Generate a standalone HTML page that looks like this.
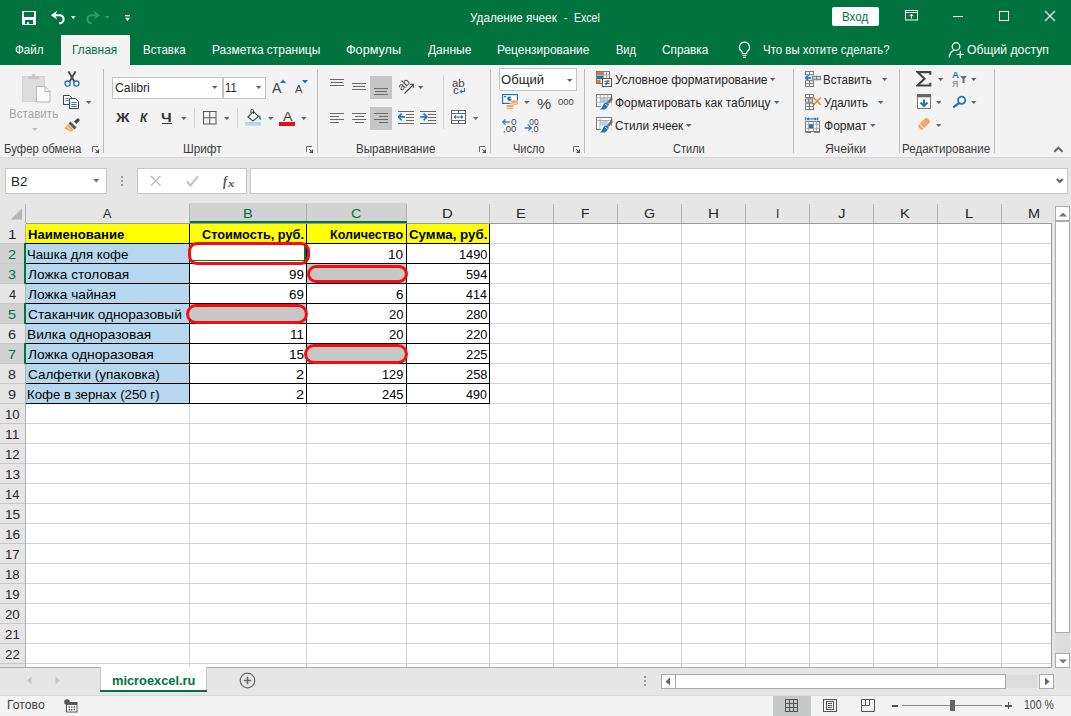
<!DOCTYPE html>
<html lang="ru"><head><meta charset="utf-8"><title>Удаление ячеек - Excel</title>
<style>
html,body{margin:0;padding:0}
body{width:1071px;height:716px;position:relative;overflow:hidden;background:#fff;font-family:"Liberation Sans",sans-serif;}
.r{position:absolute;display:block;box-sizing:border-box}
.t{position:absolute;white-space:pre;transform-origin:0 50%;display:block}
</style></head><body>
<div class="r" style="left:0px;top:0px;width:1071px;height:65px;background:#00733f;"></div>
<div class="r" style="left:0px;top:65px;width:1071px;height:92px;background:#f3f3f3;"></div>
<div class="r" style="left:0px;top:157px;width:1071px;height:1px;background:#d6d6d6;"></div>
<div class="r" style="left:0px;top:158px;width:1071px;height:45px;background:#e6e6e6;"></div>
<div class="r" style="left:61px;top:35px;width:69px;height:30px;background:#f3f3f3;"></div>
<span class="t" style="left:470.30px;top:11.34px;color:#fff;transform:scaleX(0.9780);font-size:12px;line-height:15px;">Удаление ячеек</span>
<span class="t" style="left:563.75px;top:11.34px;color:#fff;transform:scaleX(0.8133);font-size:12px;line-height:15px;">-</span>
<span class="t" style="left:573.76px;top:11.34px;color:#fff;transform:scaleX(0.8798);font-size:12px;line-height:15px;">Excel</span>
<div class="r" style="left:832px;top:7px;width:47px;height:19px;background:#fff;border-radius:2px;"></div>
<span class="t" style="left:842.26px;top:9.84px;color:#00733f;transform:scaleX(0.9655);font-size:12px;line-height:15px;">Вход</span>
<svg class="r" style="left:22px;top:11px" width="14" height="14" viewBox="0 0 14 14"><path d="M0 0h14v14h-14z M2 1v5h10v-5z M3 9v4h2v-2h2v2h4v-4z" fill="#fff" fill-rule="evenodd"/></svg>
<svg class="r" style="left:50px;top:9px" width="18" height="17" viewBox="0 0 18 17"><path d="M0.800 6.200l6.400-4.400-1.500 3.400h3.800a5 5 0 0 1 0.300 10h-0.800v-2h0.600a3 3 0 0 0-0.100-6h-3.800l1.500 3.400z" fill="#fff"/></svg>
<svg class="r" style="left:70.7px;top:15.7px" width="6" height="4" viewBox="0 0 6 4"><path d="M0 0h4.600l-2.300 3z" fill="#fff"/></svg>
<svg class="r" style="left:83px;top:9px" width="18" height="17" viewBox="0 0 18 17"><path d="M17.200 6.200l-6.400-4.400 1.500 3.400h-3.800a5 5 0 0 0-0.300 10h0.800v-2h-0.600a3 3 0 0 1 0.100-6h3.800l-1.500 3.400z" fill="#2e9a70"/></svg>
<svg class="r" style="left:104.7px;top:15.7px" width="6" height="4" viewBox="0 0 6 4"><path d="M0 0h4.600l-2.300 3z" fill="#2e9a70"/></svg>
<svg class="r" style="left:124px;top:13.7px" width="8" height="9" viewBox="0 0 8 9"><rect x="1" y="1" width="5" height="1.300" fill="#fff"/><path d="M1 3.800h5l-2.500 3.100z" fill="#fff"/></svg>
<svg class="r" style="left:905px;top:10px" width="14" height="11" viewBox="0 0 14 11"><rect x="0.5" y="0.5" width="12" height="9.5" fill="none" stroke="#fff"/><path d="M0.5 2.5h12" stroke="#fff"/><path d="M6.5 8.5v-4 M4.5 6.2l2-2 2 2" fill="none" stroke="#fff"/></svg>
<div class="r" style="left:953px;top:16px;width:10px;height:1px;background:#fff;"></div>
<div class="r" style="left:999px;top:11px;width:10px;height:10px;background:transparent;border:1px solid #fff;"></div>
<svg class="r" style="left:1044px;top:10px" width="12" height="12" viewBox="0 0 12 12"><path d="M1 1l10 10M11 1l-10 10" stroke="#fff" stroke-width="1.1" fill="none"/></svg>
<span class="t" style="left:14.52px;top:43.34px;color:#fff;transform:scaleX(0.9703);font-size:12px;line-height:15px;">Файл</span>
<span class="t" style="left:143.22px;top:43.34px;color:#fff;transform:scaleX(0.9550);font-size:12px;line-height:15px;">Вставка</span>
<span class="t" style="left:212.25px;top:43.34px;color:#fff;transform:scaleX(0.9941);font-size:12px;line-height:15px;">Разметка страницы</span>
<span class="t" style="left:346.33px;top:43.34px;color:#fff;transform:scaleX(1.0531);font-size:12px;line-height:15px;">Формулы</span>
<span class="t" style="left:427.88px;top:43.34px;color:#fff;transform:scaleX(0.9997);font-size:12px;line-height:15px;">Данные</span>
<span class="t" style="left:497.25px;top:43.34px;color:#fff;transform:scaleX(0.9970);font-size:12px;line-height:15px;">Рецензирование</span>
<span class="t" style="left:615.76px;top:43.34px;color:#fff;transform:scaleX(0.9204);font-size:12px;line-height:15px;">Вид</span>
<span class="t" style="left:662.46px;top:43.34px;color:#fff;transform:scaleX(0.9853);font-size:12px;line-height:15px;">Справка</span>
<span class="t" style="left:763.34px;top:43.34px;color:#fff;transform:scaleX(0.9546);font-size:12px;line-height:15px;">Что вы хотите сделать?</span>
<span class="t" style="left:967.49px;top:43.34px;color:#fff;transform:scaleX(1.0160);font-size:12px;line-height:15px;">Общий доступ</span>
<span class="t" style="left:72.25px;top:43.34px;color:#00733f;transform:scaleX(0.9895);font-size:12px;line-height:15px;">Главная</span>
<svg class="r" style="left:737px;top:41px" width="15" height="18" viewBox="0 0 15 18"><path d="M7.5 1.2a5 5 0 0 0-3 9c.8.7 1 1.4 1 2.3h4c0-.9.2-1.6 1-2.3a5 5 0 0 0-3-9z" fill="none" stroke="#fff" stroke-width="1.2"/><path d="M5.5 14.3h4M6 16.2h3" stroke="#fff" stroke-width="1.1"/></svg>
<svg class="r" style="left:948px;top:41px" width="17" height="18" viewBox="0 0 17 18"><circle cx="8" cy="5.5" r="3.8" fill="none" stroke="#fff" stroke-width="1.2"/><path d="M1.2 16.5c.3-4 2.5-6.5 5-7.2" fill="none" stroke="#fff" stroke-width="1.2"/><path d="M12.300 9.800v7.400M8.600 13.500h7.400" stroke="#fff" stroke-width="1.200"/></svg>
<div class="r" style="left:103px;top:69px;width:1px;height:84px;background:#bcbcbc;"></div>
<div class="r" style="left:317px;top:69px;width:1px;height:84px;background:#bcbcbc;"></div>
<div class="r" style="left:490px;top:69px;width:1px;height:84px;background:#bcbcbc;"></div>
<div class="r" style="left:584px;top:69px;width:1px;height:84px;background:#bcbcbc;"></div>
<div class="r" style="left:793px;top:69px;width:1px;height:84px;background:#bcbcbc;"></div>
<div class="r" style="left:899px;top:69px;width:1px;height:84px;background:#bcbcbc;"></div>
<div class="r" style="left:994px;top:69px;width:1px;height:84px;background:#bcbcbc;"></div>
<div class="r" style="left:443px;top:75px;width:1px;height:54px;background:#d4d4d4;"></div>
<div class="r" style="left:194px;top:108px;width:1px;height:20px;background:#d4d4d4;"></div>
<div class="r" style="left:237px;top:108px;width:1px;height:20px;background:#d4d4d4;"></div>
<span class="t" style="left:4.42px;top:142.14px;color:#3b3b3b;transform:scaleX(0.9477);font-size:12px;line-height:15px;">Буфер обмена</span>
<span class="t" style="left:183.19px;top:142.14px;color:#3b3b3b;transform:scaleX(0.9790);font-size:12px;line-height:15px;">Шрифт</span>
<span class="t" style="left:356.28px;top:142.14px;color:#3b3b3b;transform:scaleX(0.9603);font-size:12px;line-height:15px;">Выравнивание</span>
<span class="t" style="left:513.14px;top:142.14px;color:#3b3b3b;transform:scaleX(0.9191);font-size:12px;line-height:15px;">Число</span>
<span class="t" style="left:672.61px;top:142.14px;color:#3b3b3b;transform:scaleX(0.9181);font-size:12px;line-height:15px;">Стили</span>
<span class="t" style="left:825.08px;top:142.14px;color:#3b3b3b;transform:scaleX(1.0192);font-size:12px;line-height:15px;">Ячейки</span>
<span class="t" style="left:902.27px;top:142.14px;color:#3b3b3b;transform:scaleX(0.9641);font-size:12px;line-height:15px;">Редактирование</span>
<svg class="r" style="left:92px;top:146px" width="8" height="8" viewBox="0 0 8 8"><path d="M0.500 6v-5.500h5.500" fill="none" stroke="#6a6a6a" stroke-width="1"/><path d="M7 3v4h-4z" fill="#555"/><path d="M3.300 3.300l2.200 2.200" stroke="#555" stroke-width="1"/></svg>
<svg class="r" style="left:306px;top:146px" width="8" height="8" viewBox="0 0 8 8"><path d="M0.500 6v-5.500h5.500" fill="none" stroke="#6a6a6a" stroke-width="1"/><path d="M7 3v4h-4z" fill="#555"/><path d="M3.300 3.300l2.200 2.200" stroke="#555" stroke-width="1"/></svg>
<svg class="r" style="left:479px;top:146px" width="8" height="8" viewBox="0 0 8 8"><path d="M0.500 6v-5.500h5.500" fill="none" stroke="#6a6a6a" stroke-width="1"/><path d="M7 3v4h-4z" fill="#555"/><path d="M3.300 3.300l2.200 2.200" stroke="#555" stroke-width="1"/></svg>
<svg class="r" style="left:573px;top:146px" width="8" height="8" viewBox="0 0 8 8"><path d="M0.500 6v-5.500h5.500" fill="none" stroke="#6a6a6a" stroke-width="1"/><path d="M7 3v4h-4z" fill="#555"/><path d="M3.300 3.300l2.200 2.200" stroke="#555" stroke-width="1"/></svg>
<svg class="r" style="left:1053px;top:146px" width="11" height="7" viewBox="0 0 11 7"><path d="M1.300 5.800l4.100-4.100 4.100 4.100" fill="none" stroke="#666" stroke-width="2.200"/></svg>
<svg class="r" style="left:22px;top:73px" width="29" height="30" viewBox="0 0 29 30"><rect x="0.500" y="3.500" width="22" height="25" fill="#dcdcdc" stroke="#d4d4d4"/><path d="M6 6v-3h3.500a2 2 0 0 1 4 0h3.500v3z" fill="#c6c6c6"/><path d="M14.5 13.5h8.5l5 5v10.5h-13.5z" fill="#fafafa" stroke="#b8b8b8"/><path d="M23 13.5v5h5" fill="none" stroke="#b8b8b8"/></svg>
<span class="t" style="left:9.48px;top:106.84px;color:#a6a6a6;transform:scaleX(0.9667);font-size:12px;line-height:15px;">Вставить</span>
<svg class="r" style="left:32px;top:128px" width="6" height="4" viewBox="0 0 6 4"><path d="M0 0h5.5l-2.75 3z" fill="#bdbdbd"/></svg>
<svg class="r" style="left:64px;top:71px" width="16" height="16" viewBox="0 0 16 16"><path d="M4.500 0.500l5.800 10M11.500 0.500l-5.800 10" stroke="#444" stroke-width="1.800" fill="none"/><circle cx="3.6" cy="12.6" r="2.6" fill="none" stroke="#1e73be" stroke-width="1.3"/><circle cx="12.4" cy="12.6" r="2.6" fill="none" stroke="#1e73be" stroke-width="1.3"/></svg>
<svg class="r" style="left:63px;top:95px" width="17" height="14" viewBox="0 0 17 14"><path d="M0.5 0.5h6l2 2v7h-8z" fill="#fff" stroke="#444"/><path d="M2.5 3.5h3M2.5 5.5h3" stroke="#1e73be"/><path d="M6.5 3.5h6l3 3v7h-9z" fill="#fff" stroke="#444"/><path d="M8.5 7.5h5M8.5 9.5h5M8.5 11.5h5" stroke="#1e73be"/></svg>
<svg class="r" style="left:86px;top:101px" width="6" height="4" viewBox="0 0 6 4"><path d="M0 0h5.5l-2.75 3z" fill="#666"/></svg>
<svg class="r" style="left:64px;top:117px" width="17" height="15" viewBox="0 0 17 15"><path d="M10 4.5l4-3.5 2 2-3.5 4z" fill="#444"/><path d="M6.5 4.5l6 6-2 2-6-6z" fill="#555"/><path d="M4 7l6 6-3.5 1.5-6-3z" fill="#f5a55a"/><path d="M3 9.5l3.5 3.5" stroke="#fff" stroke-width=".8"/></svg>
<div class="r" style="left:112px;top:76.5px;width:110.5px;height:22px;background:#fff;border:1px solid #c4c4c4;"></div>
<div class="r" style="left:223px;top:76.5px;width:43px;height:22px;background:#fff;border:1px solid #c4c4c4;"></div>
<span class="t" style="left:114.70px;top:80.84px;color:#262626;transform:scaleX(1.0220);font-size:12px;line-height:15px;">Calibri</span>
<span class="t" style="left:225.29px;top:80.84px;color:#262626;transform:scaleX(0.9350);font-size:12px;line-height:15px;">11</span>
<svg class="r" style="left:212px;top:86px" width="6" height="4" viewBox="0 0 6 4"><path d="M0 0h5.5l-2.75 3z" fill="#666"/></svg>
<svg class="r" style="left:255.5px;top:86px" width="6" height="4" viewBox="0 0 6 4"><path d="M0 0h5.5l-2.75 3z" fill="#666"/></svg>
<span class="t" style="left:272.27px;top:78.98px;color:#444;transform:scaleX(0.9733);font-size:14.5px;line-height:18px;">A</span>
<svg class="r" style="left:280px;top:79px" width="7" height="5" viewBox="0 0 7 5"><path d="M0 4l3-3.5 3 3.5z" fill="#1e73be"/></svg>
<span class="t" style="left:295.28px;top:82.86px;color:#444;transform:scaleX(1.0577);font-size:10.5px;line-height:13px;">A</span>
<svg class="r" style="left:301.5px;top:79.5px" width="7" height="5" viewBox="0 0 7 5"><path d="M0 0h6l-3 3.5z" fill="#1e73be"/></svg>
<span class="t" style="left:115.98px;top:110.17px;color:#333;transform:scaleX(1.1990);font-size:12.5px;line-height:16px;font-weight:bold;">Ж</span>
<span class="t" style="left:140.00px;top:110.17px;color:#333;transform:scaleX(0.9524);font-size:12.5px;line-height:16px;font-weight:bold;font-style:italic;">К</span>
<span class="t" style="left:161.09px;top:110.17px;color:#333;transform:scaleX(1.2145);font-size:12.5px;line-height:16px;font-weight:bold;">Ч</span>
<div class="r" style="left:162px;top:123px;width:9.5px;height:1.3px;background:#333;"></div>
<svg class="r" style="left:180.5px;top:116.5px" width="6" height="4" viewBox="0 0 6 4"><path d="M0 0h5.5l-2.75 3z" fill="#666"/></svg>
<svg class="r" style="left:203px;top:111px" width="14" height="14" viewBox="0 0 14 14"><rect x="0.5" y="0.5" width="12.5" height="12.5" fill="none" stroke="#555"/><path d="M6.75 0.5v12.5M0.5 6.75h12.5" stroke="#555"/></svg>
<svg class="r" style="left:223.5px;top:116.5px" width="6" height="4" viewBox="0 0 6 4"><path d="M0 0h5.5l-2.75 3z" fill="#666"/></svg>
<svg class="r" style="left:245px;top:109px" width="18" height="17" viewBox="0 0 18 17"><rect x="0.200" y="13" width="15.800" height="3.700" fill="#b3d4ee"/><path d="M3 8l5.500-5.500 5 5-5.500 4.500z" fill="#fff" stroke="#444" stroke-width="1.100"/><path d="M8.500 5v-3.500a1.300 1.300 0 0 0-2.600 0v2.500" fill="none" stroke="#444" stroke-width="1"/><path d="M13.200 5.500c2.300 1.500 3.300 3.500 2.600 5.200-0.800 0.500-1.800-0.300-1.600-2z" fill="#1e73be"/></svg>
<svg class="r" style="left:268px;top:116.5px" width="6" height="4" viewBox="0 0 6 4"><path d="M0 0h5.5l-2.75 3z" fill="#666"/></svg>
<span class="t" style="left:283.00px;top:109.00px;color:#444;transform:scaleX(1.0956);font-size:13px;line-height:16px;">A</span>
<div class="r" style="left:279px;top:122px;width:16.3px;height:3.8px;background:#ea0a14;"></div>
<svg class="r" style="left:300.5px;top:116.5px" width="6" height="4" viewBox="0 0 6 4"><path d="M0 0h5.5l-2.75 3z" fill="#666"/></svg>
<div class="r" style="left:370px;top:76px;width:21.5px;height:22.5px;background:#c6c6c6;"></div>
<div class="r" style="left:370px;top:107px;width:21.5px;height:22.5px;background:#c6c6c6;"></div>
<div class="r" style="left:330.0px;top:79px;width:14px;height:1px;background:#6a6a6a;"></div>
<div class="r" style="left:331.0px;top:82px;width:12px;height:1px;background:#6a6a6a;"></div>
<div class="r" style="left:330.0px;top:85px;width:14px;height:1px;background:#6a6a6a;"></div>
<div class="r" style="left:352.0px;top:83px;width:14px;height:1px;background:#6a6a6a;"></div>
<div class="r" style="left:353.0px;top:86px;width:12px;height:1px;background:#6a6a6a;"></div>
<div class="r" style="left:352.0px;top:89px;width:14px;height:1px;background:#6a6a6a;"></div>
<div class="r" style="left:374.0px;top:88px;width:14px;height:1px;background:#6a6a6a;"></div>
<div class="r" style="left:375.0px;top:91px;width:12px;height:1px;background:#6a6a6a;"></div>
<div class="r" style="left:374.0px;top:94px;width:14px;height:1px;background:#6a6a6a;"></div>
<div class="r" style="left:330px;top:113px;width:14px;height:1px;background:#6a6a6a;"></div>
<div class="r" style="left:330px;top:116px;width:9px;height:1px;background:#6a6a6a;"></div>
<div class="r" style="left:330px;top:119px;width:14px;height:1px;background:#6a6a6a;"></div>
<div class="r" style="left:330px;top:122px;width:9px;height:1px;background:#6a6a6a;"></div>
<div class="r" style="left:352.0px;top:113px;width:14px;height:1px;background:#6a6a6a;"></div>
<div class="r" style="left:354.5px;top:116px;width:9px;height:1px;background:#6a6a6a;"></div>
<div class="r" style="left:352.0px;top:119px;width:14px;height:1px;background:#6a6a6a;"></div>
<div class="r" style="left:354.5px;top:122px;width:9px;height:1px;background:#6a6a6a;"></div>
<div class="r" style="left:374px;top:113px;width:14px;height:1px;background:#6a6a6a;"></div>
<div class="r" style="left:379px;top:116px;width:9px;height:1px;background:#6a6a6a;"></div>
<div class="r" style="left:374px;top:119px;width:14px;height:1px;background:#6a6a6a;"></div>
<div class="r" style="left:379px;top:122px;width:9px;height:1px;background:#6a6a6a;"></div>
<svg class="r" style="left:396px;top:76px" width="20" height="20" viewBox="0 0 20 20"><text x="0" y="0" font-size="11" fill="#444" transform="translate(5.800 15.300) rotate(-45)" font-family="Liberation Sans, sans-serif">ab</text><path d="M8.500 17.500l8.500-8.500" stroke="#444" stroke-width="1.100"/><path d="M13.800 8.200h3.600v3.600" fill="none" stroke="#444" stroke-width="1.100"/></svg>
<svg class="r" style="left:418px;top:86.2px" width="6" height="4" viewBox="0 0 6 4"><path d="M0 0h5.5l-2.75 3z" fill="#666"/></svg>
<span class="t" style="left:452.30px;top:75.89px;color:#444;transform:scaleX(1.0352);font-size:11px;line-height:14px;">ab</span>
<span class="t" style="left:453.01px;top:82.99px;color:#444;transform:scaleX(1.0473);font-size:11px;line-height:14px;">c</span>
<svg class="r" style="left:459px;top:88px" width="7" height="7" viewBox="0 0 7 7"><path d="M5.5 0v3.5h-4" fill="none" stroke="#1e73be" stroke-width="1.2"/><path d="M3 1.3l-2.6 2.2 2.6 2.2z" fill="#1e73be"/></svg>
<div class="r" style="left:398px;top:111px;width:16px;height:1px;background:#6a6a6a;"></div>
<div class="r" style="left:398px;top:123px;width:16px;height:1px;background:#6a6a6a;"></div>
<div class="r" style="left:406px;top:114px;width:8px;height:1px;background:#6a6a6a;"></div>
<div class="r" style="left:406px;top:117px;width:8px;height:1px;background:#6a6a6a;"></div>
<div class="r" style="left:406px;top:120px;width:8px;height:1px;background:#6a6a6a;"></div>
<svg class="r" style="left:398px;top:113px" width="8" height="8" viewBox="0 0 8 8"><path d="M7 3.900h-5.500" stroke="#1e73be" stroke-width="1.700"/><path d="M3.600 0.600l-3.300 3.300 3.300 3.300" fill="none" stroke="#1e73be" stroke-width="1.600"/></svg>
<div class="r" style="left:420px;top:111px;width:16px;height:1px;background:#6a6a6a;"></div>
<div class="r" style="left:420px;top:123px;width:16px;height:1px;background:#6a6a6a;"></div>
<div class="r" style="left:428px;top:114px;width:8px;height:1px;background:#6a6a6a;"></div>
<div class="r" style="left:428px;top:117px;width:8px;height:1px;background:#6a6a6a;"></div>
<div class="r" style="left:428px;top:120px;width:8px;height:1px;background:#6a6a6a;"></div>
<svg class="r" style="left:420px;top:113px" width="8" height="8" viewBox="0 0 8 8"><path d="M0.200 3.900h5.500" stroke="#1e73be" stroke-width="1.700"/><path d="M3.600 0.600l3.300 3.300-3.300 3.300" fill="none" stroke="#1e73be" stroke-width="1.600"/></svg>
<svg class="r" style="left:451px;top:110px" width="16" height="15" viewBox="0 0 16 15"><rect x="0.500" y="0.500" width="14" height="13" fill="#fff" stroke="#666"/><path d="M0.500 3.500h14M0.500 10.500h14M7.500 0.500v3M7.500 10.500v3" stroke="#666"/><path d="M3.500 7h8" stroke="#1e73be" stroke-width="1.100"/><path d="M5 5l-2.500 2 2.500 2zM10 5l2.500 2-2.500 2z" fill="#1e73be"/></svg>
<svg class="r" style="left:473px;top:116.5px" width="6" height="4" viewBox="0 0 6 4"><path d="M0 0h5.5l-2.75 3z" fill="#666"/></svg>
<div class="r" style="left:499px;top:67.5px;width:77.5px;height:23px;background:#fff;border:1px solid #c4c4c4;"></div>
<span class="t" style="left:501.23px;top:72.84px;color:#262626;transform:scaleX(1.0891);font-size:12px;line-height:15px;">Общий</span>
<svg class="r" style="left:567px;top:78.5px" width="6" height="4" viewBox="0 0 6 4"><path d="M0 0h5.5l-2.75 3z" fill="#666"/></svg>
<svg class="r" style="left:502px;top:94px" width="17" height="16" viewBox="0 0 17 16"><rect x="0.600" y="0.600" width="14.800" height="8.800" fill="#fff" stroke="#1e73be" stroke-width="1.200"/><circle cx="7.500" cy="4.800" r="2.300" fill="#1e73be"/><path d="M7.500 4.800h2.400v-2.400" fill="#fff"/><rect x="2" y="2" width="2.200" height="1.200" fill="#1e73be"/><rect x="11.800" y="6.600" width="2.200" height="1.200" fill="#1e73be"/><g fill="#f5a25f" stroke="#f3f3f3" stroke-width="0.700"><ellipse cx="12.300" cy="9.600" rx="4" ry="1.700"/><ellipse cx="12.300" cy="7.700" rx="4" ry="1.700"/><ellipse cx="8" cy="14" rx="4" ry="1.700"/><ellipse cx="8" cy="12.100" rx="4" ry="1.700"/></g></svg>
<svg class="r" style="left:523.5px;top:101px" width="6" height="4" viewBox="0 0 6 4"><path d="M0 0h5.5l-2.75 3z" fill="#666"/></svg>
<span class="t" style="left:537.27px;top:94.65px;color:#444;transform:scaleX(1.1402);font-size:14px;line-height:18px;">%</span>
<span class="t" style="left:558.35px;top:95.71px;color:#444;transform:scaleX(0.9916);font-size:9.5px;line-height:12px;">000</span>
<span class="t" style="left:510.78px;top:116.55px;color:#444;transform:scaleX(1.1854);font-size:8.5px;line-height:11px;">0</span>
<span class="t" style="left:503.24px;top:123.55px;color:#444;transform:scaleX(1.1172);font-size:8.5px;line-height:11px;">,00</span>
<svg class="r" style="left:502px;top:119px" width="8" height="6" viewBox="0 0 8 6"><path d="M7.5 3h-6" stroke="#1e73be" stroke-width="1.3"/><path d="M3.5 0.5l-3 2.5 3 2.5" fill="none" stroke="#1e73be" stroke-width="1.2"/></svg>
<span class="t" style="left:527.30px;top:116.55px;color:#444;transform:scaleX(0.9699);font-size:8.5px;line-height:11px;">,00</span>
<span class="t" style="left:530.55px;top:123.55px;color:#444;transform:scaleX(1.0704);font-size:8.5px;line-height:11px;">,0</span>
<svg class="r" style="left:524px;top:125px" width="8" height="6" viewBox="0 0 8 6"><path d="M0.5 3h6" stroke="#1e73be" stroke-width="1.3"/><path d="M4.5 0.5l3 2.5-3 2.5" fill="none" stroke="#1e73be" stroke-width="1.2"/></svg>
<svg class="r" style="left:596px;top:71px" width="16" height="16" viewBox="0 0 16 16"><rect x="0.500" y="0.500" width="13" height="12" fill="#fff" stroke="#7a7a7a"/><path d="M7.500 0.500v7M10.500 0.500v7M7 4h6.500" stroke="#9a9a9a"/><rect x="1" y="1" width="6" height="3" fill="#e07a2a"/><rect x="1" y="4.500" width="6" height="3.500" fill="#1e73be"/><rect x="1" y="8.500" width="3.600" height="3.500" fill="#e07a2a"/><rect x="6.500" y="7.500" width="9" height="8" fill="#fff" stroke="#555"/><path d="M8.500 10.300h5M8.500 12.700h5M12.400 8.900l-2.800 5.300" stroke="#444" stroke-width="1"/></svg>
<svg class="r" style="left:596px;top:94px" width="17" height="16" viewBox="0 0 17 16"><rect x="0.500" y="0.500" width="15" height="12" fill="#fff" stroke="#7a7a7a"/><rect x="4.300" y="4" width="7.400" height="5.500" fill="#b3d4ee"/><path d="M4.300 0.500v12M8 0.500v12M11.700 0.500v12M0.500 3.800h15M0.500 8.200h15" stroke="#a8a8a8" stroke-width="0.900"/><rect x="4.300" y="8.600" width="11.500" height="4.600" fill="#f3f3f3"/><path d="M0.500 12.500h4" stroke="#7a7a7a"/><path d="M16.200 1.600l-5.200 6.600 2 1.600 3.500-4.600z" fill="#6e6e6e"/><path d="M10.800 8.600l2 1.500c-0.500 2.500-1.900 4.400-4 5.400h-5.300c2-1 3.100-2.700 3.600-4.500 0.600-1.700 2-2.600 3.700-2.400z" fill="#1e73be"/><path d="M9.300 10.300l2.200 1.600" stroke="#fff" stroke-width="0.900"/></svg>
<svg class="r" style="left:596px;top:116.5px" width="17" height="16" viewBox="0 0 17 16"><rect x="0.500" y="0.500" width="15" height="12" fill="#fff" stroke="#7a7a7a"/><rect x="4.300" y="3.800" width="7.400" height="6" fill="#b3d4ee"/><path d="M0.500 3.500h15M4 0.500v12" stroke="#a8a8a8" stroke-width="0.900"/><rect x="4.300" y="8.600" width="11.500" height="4.600" fill="#f3f3f3"/><path d="M0.500 12.500h4" stroke="#7a7a7a"/><path d="M16.200 1.600l-5.200 6.600 2 1.600 3.500-4.600z" fill="#6e6e6e"/><path d="M10.800 8.600l2 1.500c-0.500 2.500-1.900 4.400-4 5.400h-5.300c2-1 3.100-2.700 3.600-4.500 0.600-1.700 2-2.600 3.700-2.400z" fill="#1e73be"/><path d="M9.300 10.300l2.200 1.600" stroke="#fff" stroke-width="0.900"/></svg>
<span class="t" style="left:614.58px;top:73.34px;color:#262626;transform:scaleX(0.9990);font-size:12px;line-height:15px;">Условное форматирование</span>
<svg class="r" style="left:770px;top:78px" width="6" height="4" viewBox="0 0 6 4"><path d="M0 0h5.5l-2.75 3z" fill="#666"/></svg>
<span class="t" style="left:614.78px;top:96.34px;color:#262626;transform:scaleX(0.9964);font-size:12px;line-height:15px;">Форматировать как таблицу</span>
<svg class="r" style="left:773.5px;top:101px" width="6" height="4" viewBox="0 0 6 4"><path d="M0 0h5.5l-2.75 3z" fill="#666"/></svg>
<span class="t" style="left:614.74px;top:118.84px;color:#262626;transform:scaleX(0.9848);font-size:12px;line-height:15px;">Стили ячеек</span>
<svg class="r" style="left:685.5px;top:124px" width="6" height="4" viewBox="0 0 6 4"><path d="M0 0h5.5l-2.75 3z" fill="#666"/></svg>
<svg class="r" style="left:805px;top:71px" width="17" height="16" viewBox="0 0 17 16"><rect x="0.500" y="0.500" width="4" height="3.300" fill="#fff" stroke="#7a7a7a"/><rect x="4.500" y="0.500" width="4" height="3.300" fill="#fff" stroke="#7a7a7a"/><rect x="7.500" y="5.300" width="4" height="3.400" fill="#b3d4ee" stroke="#7a7a7a"/><rect x="11.500" y="5.300" width="4" height="3.400" fill="#b3d4ee" stroke="#7a7a7a"/><path d="M6 7h-4.500" stroke="#1e73be" stroke-width="1.700"/><path d="M3.600 4.200l-3 2.800 3 2.800" fill="none" stroke="#1e73be" stroke-width="1.500"/><rect x="0.500" y="9.700" width="4" height="2.900" fill="#fff" stroke="#7a7a7a"/><rect x="4.500" y="9.700" width="4" height="2.900" fill="#fff" stroke="#7a7a7a"/><rect x="0.500" y="12.600" width="4" height="2.900" fill="#fff" stroke="#7a7a7a"/><rect x="4.500" y="12.600" width="4" height="2.900" fill="#fff" stroke="#7a7a7a"/></svg>
<svg class="r" style="left:805px;top:94px" width="17" height="16" viewBox="0 0 17 16"><rect x="0.500" y="0.500" width="4" height="2.900" fill="#fff" stroke="#7a7a7a"/><rect x="4.500" y="0.500" width="4" height="2.900" fill="#fff" stroke="#7a7a7a"/><path d="M3.500 4.800h-3v3.400h3" fill="none" stroke="#7a7a7a"/><rect x="3.500" y="4.800" width="4" height="3.400" fill="#b3d4ee" stroke="#7a7a7a"/><path d="M8.700 3.700l7 7M15.700 3.700l-7 7" stroke="#e8822e" stroke-width="1.500"/><rect x="0.500" y="9.700" width="4" height="2.900" fill="#fff" stroke="#7a7a7a"/><rect x="4.500" y="9.700" width="4" height="2.900" fill="#fff" stroke="#7a7a7a"/><rect x="0.500" y="12.600" width="4" height="2.900" fill="#fff" stroke="#7a7a7a"/><rect x="4.500" y="12.600" width="4" height="2.900" fill="#fff" stroke="#7a7a7a"/></svg>
<svg class="r" style="left:805px;top:116.5px" width="17" height="16" viewBox="0 0 17 16"><path d="M0.700 0.300v3.200M12.700 0.300v3.200" stroke="#1e73be" stroke-width="1.100"/><path d="M2 1.900h9.500" stroke="#1e73be" stroke-width="1.100"/><path d="M3.800 0.300l-2.300 1.600 2.300 1.600zM9.700 0.300l2.300 1.600-2.300 1.600z" fill="#1e73be"/><rect x="0.500" y="4.500" width="14" height="10" fill="#fff" stroke="#7a7a7a"/><path d="M0.500 7.300h14M0.500 11.300h14M3.800 4.500v10M8.300 4.500v10M11.600 4.500v10" stroke="#a0a0a0" stroke-width="0.900"/><rect x="3.800" y="7.300" width="4.500" height="4" fill="#1e73be"/><path d="M0.500 14.500v1h5.500M14.500 14.500v1h-5.500" fill="none" stroke="#7a7a7a"/></svg>
<span class="t" style="left:823.46px;top:73.34px;color:#262626;transform:scaleX(0.9582);font-size:12px;line-height:15px;">Вставить</span>
<svg class="r" style="left:882px;top:78px" width="6" height="4" viewBox="0 0 6 4"><path d="M0 0h5.5l-2.75 3z" fill="#666"/></svg>
<span class="t" style="left:823.70px;top:96.34px;color:#262626;transform:scaleX(0.9598);font-size:12px;line-height:15px;">Удалить</span>
<svg class="r" style="left:878px;top:101px" width="6" height="4" viewBox="0 0 6 4"><path d="M0 0h5.5l-2.75 3z" fill="#666"/></svg>
<span class="t" style="left:823.77px;top:118.84px;color:#262626;transform:scaleX(1.0016);font-size:12px;line-height:15px;">Формат</span>
<svg class="r" style="left:869.5px;top:124px" width="6" height="4" viewBox="0 0 6 4"><path d="M0 0h5.5l-2.75 3z" fill="#666"/></svg>
<svg class="r" style="left:916px;top:71px" width="16" height="16" viewBox="0 0 16 16"><path d="M14.300 3.800v-2.700h-12.800l7 6.700-7 6.700h12.800v-2.700" fill="none" stroke="#444" stroke-width="2.100" stroke-linejoin="miter"/></svg>
<svg class="r" style="left:938px;top:78px" width="6" height="4" viewBox="0 0 6 4"><path d="M0 0h5.5l-2.75 3z" fill="#666"/></svg>
<span class="t" style="left:951.71px;top:69.68px;color:#1e73be;transform:scaleX(1.0719);font-size:9px;line-height:11px;font-weight:bold;">А</span>
<span class="t" style="left:952.11px;top:77.51px;color:#999;transform:scaleX(0.9206);font-size:9.5px;line-height:12px;font-weight:bold;">Я</span>
<svg class="r" style="left:960px;top:75.5px" width="8" height="8" viewBox="0 0 8 8"><path d="M0 0h7l-2.500 3v4h-2v-4z" fill="#6e6e6e"/></svg>
<svg class="r" style="left:971px;top:78px" width="6" height="4" viewBox="0 0 6 4"><path d="M0 0h5.5l-2.75 3z" fill="#666"/></svg>
<svg class="r" style="left:917px;top:94px" width="15" height="16" viewBox="0 0 15 16"><rect x="0.500" y="0.500" width="13" height="14" fill="#fff" stroke="#777"/><rect x="0" y="0" width="14" height="3.300" fill="#666"/><path d="M7 5.500v6.500" stroke="#1e73be" stroke-width="2"/><path d="M3.500 8.500l3.500 3.500 3.500-3.500" fill="none" stroke="#1e73be" stroke-width="2"/></svg>
<svg class="r" style="left:936px;top:101px" width="6" height="4" viewBox="0 0 6 4"><path d="M0 0h5.5l-2.75 3z" fill="#666"/></svg>
<svg class="r" style="left:952px;top:94px" width="15" height="15" viewBox="0 0 15 15"><circle cx="9.700" cy="6.200" r="3.600" fill="#fff" stroke="#1e73be" stroke-width="1.800"/><path d="M7 9l-5.800 4.300" stroke="#1e73be" stroke-width="2.200"/></svg>
<svg class="r" style="left:971px;top:101px" width="6" height="4" viewBox="0 0 6 4"><path d="M0 0h5.5l-2.75 3z" fill="#666"/></svg>
<svg class="r" style="left:915.6px;top:116.2px" width="16" height="16" viewBox="0 0 16 16"><g transform="rotate(-45 8 8)"><rect x="1.800" y="4.800" width="12.600" height="6.400" rx="1.600" fill="#f5a66b"/><rect x="4.400" y="4.800" width="0.900" height="6.400" fill="#f3f3f3"/></g></svg>
<svg class="r" style="left:936px;top:124px" width="6" height="4" viewBox="0 0 6 4"><path d="M0 0h5.5l-2.75 3z" fill="#666"/></svg>
<div class="r" style="left:5px;top:168px;width:102px;height:25.6px;background:#fff;border:1px solid #c8c8c8;"></div>
<span class="t" style="left:11.41px;top:173.50px;color:#262626;transform:scaleX(1.0299);font-size:13px;line-height:16px;">B2</span>
<svg class="r" style="left:93px;top:179px" width="7" height="4" viewBox="0 0 7 4"><path d="M0 0h6.500l-3.250 3.500z" fill="#777"/></svg>
<div class="r" style="left:121px;top:176px;width:1.5px;height:1.5px;background:#9a9a9a;"></div>
<div class="r" style="left:121px;top:180px;width:1.5px;height:1.5px;background:#9a9a9a;"></div>
<div class="r" style="left:121px;top:184px;width:1.5px;height:1.5px;background:#9a9a9a;"></div>
<div class="r" style="left:137px;top:168px;width:110px;height:25.6px;background:#fff;border:1px solid #c8c8c8;"></div>
<svg class="r" style="left:150px;top:175px" width="12" height="12" viewBox="0 0 12 12"><path d="M1 1l9.500 9.500M10.500 1l-9.500 9.500" stroke="#c0c0c0" stroke-width="1.500" fill="none"/></svg>
<svg class="r" style="left:186px;top:175px" width="13" height="12" viewBox="0 0 13 12"><path d="M1 6.500l3.500 4 7.500-9.500" stroke="#c0c0c0" stroke-width="2" fill="none"/></svg>
<span class="t" style="left:222.56px;top:172.65px;color:#555;transform:scaleX(0.8682);font-size:14px;line-height:18px;font-weight:bold;font-style:italic;font-family:'Liberation Serif',serif;">f</span>
<span class="t" style="left:227.75px;top:178.03px;color:#555;transform:scaleX(1.2809);font-size:10px;line-height:12px;font-weight:bold;font-style:italic;font-family:'Liberation Serif',serif;">x</span>
<div class="r" style="left:250px;top:168px;width:818px;height:25.6px;background:#fff;border:1px solid #c8c8c8;"></div>
<svg class="r" style="left:1056px;top:178px" width="8" height="6" viewBox="0 0 8 6"><path d="M0.900 0.900l2.900 3 2.900-3" fill="none" stroke="#666" stroke-width="2.200"/></svg>
<div class="r" style="left:0px;top:203px;width:1071px;height:465px;background:#e6e6e6;"></div>
<div class="r" style="left:26px;top:224px;width:1025px;height:443px;background:#fff;"></div>
<div class="r" style="left:190px;top:203px;width:217px;height:18px;background:#d2d2d2;"></div>
<div class="r" style="left:189px;top:204px;width:1px;height:19px;background:#b1b1b1;"></div>
<div class="r" style="left:306px;top:204px;width:1px;height:19px;background:#b1b1b1;"></div>
<div class="r" style="left:406px;top:204px;width:1px;height:19px;background:#b1b1b1;"></div>
<div class="r" style="left:489px;top:204px;width:1px;height:19px;background:#b1b1b1;"></div>
<div class="r" style="left:553px;top:204px;width:1px;height:19px;background:#b1b1b1;"></div>
<div class="r" style="left:617px;top:204px;width:1px;height:19px;background:#b1b1b1;"></div>
<div class="r" style="left:681px;top:204px;width:1px;height:19px;background:#b1b1b1;"></div>
<div class="r" style="left:745px;top:204px;width:1px;height:19px;background:#b1b1b1;"></div>
<div class="r" style="left:809px;top:204px;width:1px;height:19px;background:#b1b1b1;"></div>
<div class="r" style="left:873px;top:204px;width:1px;height:19px;background:#b1b1b1;"></div>
<div class="r" style="left:937px;top:204px;width:1px;height:19px;background:#b1b1b1;"></div>
<div class="r" style="left:1001px;top:204px;width:1px;height:19px;background:#b1b1b1;"></div>
<div class="r" style="left:25px;top:204px;width:1px;height:19px;background:#b1b1b1;"></div>
<div class="r" style="left:26px;top:223px;width:1026px;height:1px;background:#9b9b9b;"></div>
<div class="r" style="left:190px;top:221px;width:217px;height:2px;background:#00733f;"></div>
<span class="t" style="left:103.00px;top:205.50px;color:#262626;transform:scaleX(0.9627);font-size:13px;line-height:16px;">A</span>
<span class="t" style="left:243.08px;top:205.50px;color:#00733f;transform:scaleX(1.1245);font-size:13px;line-height:16px;">B</span>
<span class="t" style="left:351.46px;top:205.50px;color:#00733f;transform:scaleX(1.0972);font-size:13px;line-height:16px;">C</span>
<span class="t" style="left:442.27px;top:205.50px;color:#262626;transform:scaleX(1.1467);font-size:13px;line-height:16px;">D</span>
<span class="t" style="left:516.09px;top:205.50px;color:#262626;transform:scaleX(1.1319);font-size:13px;line-height:16px;">E</span>
<span class="t" style="left:580.96px;top:205.50px;color:#262626;transform:scaleX(1.0730);font-size:13px;line-height:16px;">F</span>
<span class="t" style="left:644.05px;top:205.50px;color:#262626;transform:scaleX(1.0962);font-size:13px;line-height:16px;">G</span>
<span class="t" style="left:707.75px;top:205.50px;color:#262626;transform:scaleX(1.1689);font-size:13px;line-height:16px;">H</span>
<span class="t" style="left:775.84px;top:205.50px;color:#262626;transform:scaleX(0.9200);font-size:13px;line-height:16px;">I</span>
<span class="t" style="left:837.77px;top:205.50px;color:#262626;transform:scaleX(1.1516);font-size:13px;line-height:16px;">J</span>
<span class="t" style="left:900.39px;top:205.50px;color:#262626;transform:scaleX(1.1313);font-size:13px;line-height:16px;">K</span>
<span class="t" style="left:964.77px;top:205.50px;color:#262626;transform:scaleX(1.1444);font-size:13px;line-height:16px;">L</span>
<span class="t" style="left:1028.11px;top:205.50px;color:#262626;transform:scaleX(1.1152);font-size:13px;line-height:16px;">M</span>
<svg class="r" style="left:10px;top:208px" width="13" height="12" viewBox="0 0 13 12"><path d="M12 0.600v11h-11.300z" fill="#b7b7b7"/></svg>
<div class="r" style="left:0px;top:243px;width:25px;height:1px;background:#c8c8c8;"></div>
<span class="t" style="left:8.36px;top:227.00px;color:#262626;transform:scaleX(1.1839);font-size:13px;line-height:16px;">1</span>
<div class="r" style="left:0px;top:244px;width:25px;height:19px;background:#d2d2d2;"></div>
<div class="r" style="left:0px;top:263px;width:25px;height:1px;background:#c8c8c8;"></div>
<span class="t" style="left:8.20px;top:247.00px;color:#00733f;transform:scaleX(1.1141);font-size:13px;line-height:16px;">2</span>
<div class="r" style="left:0px;top:264px;width:25px;height:19px;background:#d2d2d2;"></div>
<div class="r" style="left:0px;top:283px;width:25px;height:1px;background:#c8c8c8;"></div>
<span class="t" style="left:8.32px;top:267.00px;color:#00733f;transform:scaleX(1.1072);font-size:13px;line-height:16px;">3</span>
<div class="r" style="left:0px;top:303px;width:25px;height:1px;background:#c8c8c8;"></div>
<span class="t" style="left:9.02px;top:287.00px;color:#262626;transform:scaleX(0.9843);font-size:13px;line-height:16px;">4</span>
<div class="r" style="left:0px;top:304px;width:25px;height:19px;background:#d2d2d2;"></div>
<div class="r" style="left:0px;top:323px;width:25px;height:1px;background:#c8c8c8;"></div>
<span class="t" style="left:8.32px;top:307.00px;color:#00733f;transform:scaleX(1.1029);font-size:13px;line-height:16px;">5</span>
<div class="r" style="left:0px;top:343px;width:25px;height:1px;background:#c8c8c8;"></div>
<span class="t" style="left:8.27px;top:327.00px;color:#262626;transform:scaleX(1.1133);font-size:13px;line-height:16px;">6</span>
<div class="r" style="left:0px;top:344px;width:25px;height:19px;background:#d2d2d2;"></div>
<div class="r" style="left:0px;top:363px;width:25px;height:1px;background:#c8c8c8;"></div>
<span class="t" style="left:8.28px;top:347.00px;color:#00733f;transform:scaleX(1.1135);font-size:13px;line-height:16px;">7</span>
<div class="r" style="left:0px;top:383px;width:25px;height:1px;background:#c8c8c8;"></div>
<span class="t" style="left:8.46px;top:367.00px;color:#262626;transform:scaleX(1.0973);font-size:13px;line-height:16px;">8</span>
<div class="r" style="left:0px;top:403px;width:25px;height:1px;background:#c8c8c8;"></div>
<span class="t" style="left:8.20px;top:387.00px;color:#262626;transform:scaleX(1.1124);font-size:13px;line-height:16px;">9</span>
<div class="r" style="left:0px;top:423px;width:25px;height:1px;background:#c8c8c8;"></div>
<span class="t" style="left:4.92px;top:407.00px;color:#262626;transform:scaleX(1.0137);font-size:13px;line-height:16px;">10</span>
<div class="r" style="left:0px;top:443px;width:25px;height:1px;background:#c8c8c8;"></div>
<span class="t" style="left:5.18px;top:427.00px;color:#262626;transform:scaleX(1.0616);font-size:13px;line-height:16px;">11</span>
<div class="r" style="left:0px;top:463px;width:25px;height:1px;background:#c8c8c8;"></div>
<span class="t" style="left:4.92px;top:447.00px;color:#262626;transform:scaleX(1.0094);font-size:13px;line-height:16px;">12</span>
<div class="r" style="left:0px;top:483px;width:25px;height:1px;background:#c8c8c8;"></div>
<span class="t" style="left:4.69px;top:467.00px;color:#262626;transform:scaleX(1.0488);font-size:13px;line-height:16px;">13</span>
<div class="r" style="left:0px;top:503px;width:25px;height:1px;background:#c8c8c8;"></div>
<span class="t" style="left:4.94px;top:487.00px;color:#262626;transform:scaleX(0.9864);font-size:13px;line-height:16px;">14</span>
<div class="r" style="left:0px;top:523px;width:25px;height:1px;background:#c8c8c8;"></div>
<span class="t" style="left:4.69px;top:507.00px;color:#262626;transform:scaleX(1.0488);font-size:13px;line-height:16px;">15</span>
<div class="r" style="left:0px;top:543px;width:25px;height:1px;background:#c8c8c8;"></div>
<span class="t" style="left:4.69px;top:527.00px;color:#262626;transform:scaleX(1.0501);font-size:13px;line-height:16px;">16</span>
<div class="r" style="left:0px;top:563px;width:25px;height:1px;background:#c8c8c8;"></div>
<span class="t" style="left:4.92px;top:547.00px;color:#262626;transform:scaleX(1.0094);font-size:13px;line-height:16px;">17</span>
<div class="r" style="left:0px;top:583px;width:25px;height:1px;background:#c8c8c8;"></div>
<span class="t" style="left:4.92px;top:567.00px;color:#262626;transform:scaleX(1.0137);font-size:13px;line-height:16px;">18</span>
<div class="r" style="left:0px;top:603px;width:25px;height:1px;background:#c8c8c8;"></div>
<span class="t" style="left:4.92px;top:587.00px;color:#262626;transform:scaleX(1.0107);font-size:13px;line-height:16px;">19</span>
<div class="r" style="left:0px;top:623px;width:25px;height:1px;background:#c8c8c8;"></div>
<span class="t" style="left:5.33px;top:607.00px;color:#262626;transform:scaleX(1.0197);font-size:13px;line-height:16px;">20</span>
<div class="r" style="left:0px;top:643px;width:25px;height:1px;background:#c8c8c8;"></div>
<span class="t" style="left:5.38px;top:627.00px;color:#262626;transform:scaleX(1.0258);font-size:13px;line-height:16px;">21</span>
<div class="r" style="left:0px;top:663px;width:25px;height:1px;background:#c8c8c8;"></div>
<span class="t" style="left:5.38px;top:647.00px;color:#262626;transform:scaleX(1.0269);font-size:13px;line-height:16px;">22</span>
<div class="r" style="left:25px;top:224px;width:1px;height:443px;background:#b1b1b1;"></div>
<div class="r" style="left:24px;top:243px;width:2px;height:21px;background:#00733f;"></div>
<div class="r" style="left:24px;top:263px;width:2px;height:21px;background:#00733f;"></div>
<div class="r" style="left:24px;top:303px;width:2px;height:21px;background:#00733f;"></div>
<div class="r" style="left:24px;top:343px;width:2px;height:21px;background:#00733f;"></div>
<div class="r" style="left:189px;top:224px;width:1px;height:443px;background:#d4d4d4;"></div>
<div class="r" style="left:306px;top:224px;width:1px;height:443px;background:#d4d4d4;"></div>
<div class="r" style="left:406px;top:224px;width:1px;height:443px;background:#d4d4d4;"></div>
<div class="r" style="left:489px;top:224px;width:1px;height:443px;background:#d4d4d4;"></div>
<div class="r" style="left:553px;top:224px;width:1px;height:443px;background:#d4d4d4;"></div>
<div class="r" style="left:617px;top:224px;width:1px;height:443px;background:#d4d4d4;"></div>
<div class="r" style="left:681px;top:224px;width:1px;height:443px;background:#d4d4d4;"></div>
<div class="r" style="left:745px;top:224px;width:1px;height:443px;background:#d4d4d4;"></div>
<div class="r" style="left:809px;top:224px;width:1px;height:443px;background:#d4d4d4;"></div>
<div class="r" style="left:873px;top:224px;width:1px;height:443px;background:#d4d4d4;"></div>
<div class="r" style="left:937px;top:224px;width:1px;height:443px;background:#d4d4d4;"></div>
<div class="r" style="left:1001px;top:224px;width:1px;height:443px;background:#d4d4d4;"></div>
<div class="r" style="left:1051px;top:224px;width:1px;height:443px;background:#d4d4d4;"></div>
<div class="r" style="left:26px;top:243px;width:1025px;height:1px;background:#d4d4d4;"></div>
<div class="r" style="left:26px;top:263px;width:1025px;height:1px;background:#d4d4d4;"></div>
<div class="r" style="left:26px;top:283px;width:1025px;height:1px;background:#d4d4d4;"></div>
<div class="r" style="left:26px;top:303px;width:1025px;height:1px;background:#d4d4d4;"></div>
<div class="r" style="left:26px;top:323px;width:1025px;height:1px;background:#d4d4d4;"></div>
<div class="r" style="left:26px;top:343px;width:1025px;height:1px;background:#d4d4d4;"></div>
<div class="r" style="left:26px;top:363px;width:1025px;height:1px;background:#d4d4d4;"></div>
<div class="r" style="left:26px;top:383px;width:1025px;height:1px;background:#d4d4d4;"></div>
<div class="r" style="left:26px;top:403px;width:1025px;height:1px;background:#d4d4d4;"></div>
<div class="r" style="left:26px;top:423px;width:1025px;height:1px;background:#d4d4d4;"></div>
<div class="r" style="left:26px;top:443px;width:1025px;height:1px;background:#d4d4d4;"></div>
<div class="r" style="left:26px;top:463px;width:1025px;height:1px;background:#d4d4d4;"></div>
<div class="r" style="left:26px;top:483px;width:1025px;height:1px;background:#d4d4d4;"></div>
<div class="r" style="left:26px;top:503px;width:1025px;height:1px;background:#d4d4d4;"></div>
<div class="r" style="left:26px;top:523px;width:1025px;height:1px;background:#d4d4d4;"></div>
<div class="r" style="left:26px;top:543px;width:1025px;height:1px;background:#d4d4d4;"></div>
<div class="r" style="left:26px;top:563px;width:1025px;height:1px;background:#d4d4d4;"></div>
<div class="r" style="left:26px;top:583px;width:1025px;height:1px;background:#d4d4d4;"></div>
<div class="r" style="left:26px;top:603px;width:1025px;height:1px;background:#d4d4d4;"></div>
<div class="r" style="left:26px;top:623px;width:1025px;height:1px;background:#d4d4d4;"></div>
<div class="r" style="left:26px;top:643px;width:1025px;height:1px;background:#d4d4d4;"></div>
<div class="r" style="left:26px;top:663px;width:1025px;height:1px;background:#d4d4d4;"></div>
<div class="r" style="left:1051px;top:223px;width:1px;height:445px;background:#9b9b9b;"></div>
<div class="r" style="left:0px;top:667px;width:1052px;height:1px;background:#ababab;"></div>
<div class="r" style="left:26px;top:224px;width:464px;height:19px;background:#ffff00;"></div>
<div class="r" style="left:26px;top:244px;width:163px;height:159px;background:#b7d7ee;"></div>
<div class="r" style="left:26px;top:243px;width:464px;height:1px;background:#000;"></div>
<div class="r" style="left:26px;top:263px;width:464px;height:1px;background:#000;"></div>
<div class="r" style="left:26px;top:283px;width:464px;height:1px;background:#000;"></div>
<div class="r" style="left:26px;top:303px;width:464px;height:1px;background:#000;"></div>
<div class="r" style="left:26px;top:323px;width:464px;height:1px;background:#000;"></div>
<div class="r" style="left:26px;top:343px;width:464px;height:1px;background:#000;"></div>
<div class="r" style="left:26px;top:363px;width:464px;height:1px;background:#000;"></div>
<div class="r" style="left:26px;top:383px;width:464px;height:1px;background:#000;"></div>
<div class="r" style="left:26px;top:403px;width:464px;height:1px;background:#000;"></div>
<div class="r" style="left:189px;top:224px;width:1px;height:180px;background:#000;"></div>
<div class="r" style="left:306px;top:224px;width:1px;height:180px;background:#000;"></div>
<div class="r" style="left:406px;top:224px;width:1px;height:180px;background:#000;"></div>
<div class="r" style="left:489px;top:224px;width:1px;height:180px;background:#000;"></div>
<span class="t" style="left:27.77px;top:227.00px;color:#000;transform:scaleX(1.0096);font-size:13px;line-height:16px;font-weight:bold;">Наименование</span>
<span class="t" style="left:27.25px;top:247.00px;color:#000;transform:scaleX(1.0127);font-size:13px;line-height:16px;">Чашка для кофе</span>
<span class="t" style="left:28.35px;top:267.00px;color:#000;transform:scaleX(1.0492);font-size:13px;line-height:16px;">Ложка столовая</span>
<span class="t" style="left:28.35px;top:287.00px;color:#000;transform:scaleX(1.0510);font-size:13px;line-height:16px;">Ложка чайная</span>
<span class="t" style="left:27.65px;top:307.00px;color:#000;transform:scaleX(1.0540);font-size:13px;line-height:16px;">Стаканчик одноразовый</span>
<span class="t" style="left:27.37px;top:327.00px;color:#000;transform:scaleX(1.0555);font-size:13px;line-height:16px;">Вилка одноразовая</span>
<span class="t" style="left:28.06px;top:347.00px;color:#000;transform:scaleX(1.0606);font-size:13px;line-height:16px;">Ложка одноразовая</span>
<span class="t" style="left:27.65px;top:367.00px;color:#000;transform:scaleX(1.0380);font-size:13px;line-height:16px;">Салфетки (упаковка)</span>
<span class="t" style="left:27.41px;top:387.00px;color:#000;transform:scaleX(1.0169);font-size:13px;line-height:16px;">Кофе в зернах (250 г)</span>
<span class="t" style="left:202.21px;top:227.00px;color:#000;transform:scaleX(0.9784);font-size:13px;line-height:16px;font-weight:bold;">Стоимость, руб.</span>
<span class="t" style="left:330.33px;top:227.00px;color:#000;transform:scaleX(0.9641);font-size:13px;line-height:16px;font-weight:bold;">Количество</span>
<span class="t" style="left:409.18px;top:227.00px;color:#000;transform:scaleX(1.0225);font-size:13px;line-height:16px;font-weight:bold;">Сумма, руб.</span>
<span class="t" style="left:289.37px;top:267.00px;color:#000;transform:scaleX(1.0294);font-size:13px;line-height:16px;">99</span>
<span class="t" style="left:289.11px;top:287.00px;color:#000;transform:scaleX(1.0280);font-size:13px;line-height:16px;">69</span>
<span class="t" style="left:290.20px;top:327.00px;color:#000;transform:scaleX(1.0223);font-size:13px;line-height:16px;">11</span>
<span class="t" style="left:289.32px;top:347.00px;color:#000;transform:scaleX(1.0488);font-size:13px;line-height:16px;">15</span>
<span class="t" style="left:296.45px;top:367.00px;color:#000;transform:scaleX(1.1142);font-size:13px;line-height:16px;">2</span>
<span class="t" style="left:296.45px;top:387.00px;color:#000;transform:scaleX(1.1142);font-size:13px;line-height:16px;">2</span>
<span class="t" style="left:388.34px;top:247.00px;color:#000;transform:scaleX(1.0475);font-size:13px;line-height:16px;">10</span>
<span class="t" style="left:396.02px;top:287.00px;color:#000;transform:scaleX(1.0374);font-size:13px;line-height:16px;">6</span>
<span class="t" style="left:388.77px;top:307.00px;color:#000;transform:scaleX(1.0055);font-size:13px;line-height:16px;">20</span>
<span class="t" style="left:388.77px;top:327.00px;color:#000;transform:scaleX(1.0055);font-size:13px;line-height:16px;">20</span>
<span class="t" style="left:382.04px;top:367.00px;color:#000;transform:scaleX(0.9777);font-size:13px;line-height:16px;">129</span>
<span class="t" style="left:382.20px;top:387.00px;color:#000;transform:scaleX(0.9928);font-size:13px;line-height:16px;">245</span>
<span class="t" style="left:459.46px;top:247.00px;color:#000;transform:scaleX(0.9837);font-size:13px;line-height:16px;">1490</span>
<span class="t" style="left:466.45px;top:267.00px;color:#000;transform:scaleX(0.9769);font-size:13px;line-height:16px;">594</span>
<span class="t" style="left:466.21px;top:287.00px;color:#000;transform:scaleX(0.9602);font-size:13px;line-height:16px;">414</span>
<span class="t" style="left:466.47px;top:307.00px;color:#000;transform:scaleX(0.9919);font-size:13px;line-height:16px;">280</span>
<span class="t" style="left:466.47px;top:327.00px;color:#000;transform:scaleX(0.9919);font-size:13px;line-height:16px;">220</span>
<span class="t" style="left:466.20px;top:347.00px;color:#000;transform:scaleX(0.9928);font-size:13px;line-height:16px;">225</span>
<span class="t" style="left:466.29px;top:367.00px;color:#000;transform:scaleX(0.9932);font-size:13px;line-height:16px;">258</span>
<span class="t" style="left:466.21px;top:387.00px;color:#000;transform:scaleX(0.9643);font-size:13px;line-height:16px;">490</span>
<div class="r" style="left:307px;top:264px;width:99px;height:19px;background:#c6c8c7;"></div>
<div class="r" style="left:190px;top:304px;width:116px;height:19px;background:#c6c8c7;"></div>
<div class="r" style="left:307px;top:344px;width:99px;height:19px;background:#c6c8c7;"></div>
<div class="r" style="left:192px;top:260.2px;width:113px;height:1.3px;background:#00733f;"></div>
<div class="r" style="left:304.3px;top:246px;width:1.4px;height:15px;background:#00733f;"></div>
<div class="r" style="left:188px;top:242.3px;width:121.70px;height:22.30px;border:3px solid #fa0a0a;border-radius:9px;background:transparent"></div>
<div class="r" style="left:306.8px;top:265.1px;width:100.80px;height:18.40px;border:3px solid #fa0a0a;border-radius:9.2px;background:#c6c8c7"></div>
<div class="r" style="left:186.3px;top:303.8px;width:122.20px;height:20.00px;border:3px solid #fa0a0a;border-radius:10px;background:#c6c8c7"></div>
<div class="r" style="left:303.7px;top:343.5px;width:103.90px;height:20.20px;border:3px solid #fa0a0a;border-radius:10px;background:#c6c8c7"></div>
<div class="r" style="left:1052px;top:203px;width:19px;height:465px;background:#e6e6e6;"></div>
<div class="r" style="left:1055px;top:206px;width:15px;height:15px;background:#fff;border:1px solid #ababab;"></div>
<svg class="r" style="left:1058.5px;top:211.5px" width="8" height="5" viewBox="0 0 8 5"><path d="M0 4.500l4-4 4 4z" fill="#777"/></svg>
<div class="r" style="left:1055px;top:221px;width:15px;height:412px;background:#fff;border:1px solid #ababab;"></div>
<div class="r" style="left:1055px;top:633px;width:15px;height:20px;background:#dcdcdc;"></div>
<div class="r" style="left:1055px;top:653px;width:15px;height:15px;background:#fff;border:1px solid #ababab;"></div>
<svg class="r" style="left:1058.5px;top:658.5px" width="8" height="5" viewBox="0 0 8 5"><path d="M0 0.500h8l-4 4z" fill="#777"/></svg>
<div class="r" style="left:0px;top:668px;width:1071px;height:28px;background:#e6e6e6;"></div>
<div class="r" style="left:100px;top:667px;width:107px;height:25px;background:#fff;border-left:1px solid #c8c8c8;border-right:1px solid #c8c8c8;"></div>
<div class="r" style="left:100px;top:690px;width:107px;height:2px;background:#00733f;"></div>
<span class="t" style="left:111.65px;top:672.50px;color:#00733f;transform:scaleX(0.9860);font-size:13px;line-height:16px;font-weight:bold;">microexcel.ru</span>
<svg class="r" style="left:27px;top:676px" width="5" height="9" viewBox="0 0 5 9"><path d="M4.500 0.500v8l-4.500-4z" fill="#c4c4c4"/></svg>
<svg class="r" style="left:55px;top:676px" width="5" height="9" viewBox="0 0 5 9"><path d="M0.500 0.500v8l4.500-4z" fill="#c4c4c4"/></svg>
<svg class="r" style="left:239px;top:672px" width="17" height="17" viewBox="0 0 17 17"><circle cx="8.500" cy="8.500" r="7.300" fill="none" stroke="#6a6a6a" stroke-width="1.200"/><path d="M8.500 4.800v7.400M4.800 8.500h7.400" stroke="#6a6a6a" stroke-width="1.700"/></svg>
<div class="r" style="left:644px;top:676px;width:1.5px;height:1.5px;background:#9a9a9a;"></div>
<div class="r" style="left:644px;top:680px;width:1.5px;height:1.5px;background:#9a9a9a;"></div>
<div class="r" style="left:644px;top:684px;width:1.5px;height:1.5px;background:#9a9a9a;"></div>
<div class="r" style="left:661px;top:674px;width:15px;height:15px;background:#fff;border:1px solid #ababab;"></div>
<svg class="r" style="left:665px;top:677px" width="6" height="9" viewBox="0 0 6 9"><path d="M5 0.500v8l-4.500-4z" fill="#666"/></svg>
<div class="r" style="left:675px;top:674px;width:331px;height:15px;background:#fff;border:1px solid #ababab;"></div>
<div class="r" style="left:1006px;top:675px;width:31px;height:13px;background:#dcdcdc;"></div>
<div class="r" style="left:1039px;top:674px;width:15px;height:15px;background:#fff;border:1px solid #ababab;"></div>
<svg class="r" style="left:1044px;top:677px" width="6" height="9" viewBox="0 0 6 9"><path d="M1 0.500v8l4.500-4z" fill="#666"/></svg>
<div class="r" style="left:0px;top:696px;width:1071px;height:20px;background:#f3f3f3;"></div>
<div class="r" style="left:0px;top:695px;width:1071px;height:1px;background:#dadada;"></div>
<span class="t" style="left:7.19px;top:698.34px;color:#444;transform:scaleX(1.0169);font-size:12px;line-height:15px;">Готово</span>
<svg class="r" style="left:64px;top:699px" width="14" height="14" viewBox="0 0 14 14"><circle cx="3" cy="3" r="2.800" fill="#555"/><rect x="2.500" y="3.500" width="10.500" height="9.500" fill="#fff" stroke="#555"/><rect x="2.500" y="3.500" width="10.500" height="2.500" fill="#555"/><path d="M4.500 8h1.500M7 8h1.500M9.500 8h1.500M4.500 10.500h1.500M7 10.500h1.500M9.500 10.500h1.500" stroke="#555" stroke-width="1.300"/></svg>
<div class="r" style="left:773px;top:696px;width:38px;height:20px;background:#c6c8c7;"></div>
<svg class="r" style="left:785px;top:699px" width="14" height="14" viewBox="0 0 14 14"><rect x="0.500" y="0.500" width="12" height="12" fill="none" stroke="#555"/><path d="M4.500 0.500v12M8.500 0.500v12M0.500 4.500h12M0.500 8.500h12" stroke="#555"/></svg>
<svg class="r" style="left:823px;top:699px" width="15" height="14" viewBox="0 0 15 14"><rect x="0.500" y="0.500" width="13" height="12" fill="none" stroke="#555"/><rect x="3.500" y="2.500" width="7" height="8" fill="none" stroke="#555"/><path d="M5 4.500h4M5 6.500h4M5 8.500h4" stroke="#555"/></svg>
<svg class="r" style="left:861px;top:699px" width="15" height="14" viewBox="0 0 15 14"><path d="M0.500 12.500v-12h13v12zM4.500 0.500v6h-4M8.500 0.500v6h-4" fill="none" stroke="#555"/></svg>
<div class="r" style="left:892px;top:705px;width:6px;height:2px;background:#555;"></div>
<div class="r" style="left:902px;top:705px;width:100px;height:1px;background:#8a8a8a;"></div>
<div class="r" style="left:950px;top:700px;width:4.5px;height:11px;background:#666;"></div>
<div class="r" style="left:1005px;top:705px;width:7px;height:1.5px;background:#555;"></div>
<div class="r" style="left:1007.8px;top:702.2px;width:1.5px;height:7px;background:#555;"></div>
<span class="t" style="left:1023.76px;top:698.34px;color:#444;transform:scaleX(0.8731);font-size:12px;line-height:15px;">100 %</span>
</body></html>
